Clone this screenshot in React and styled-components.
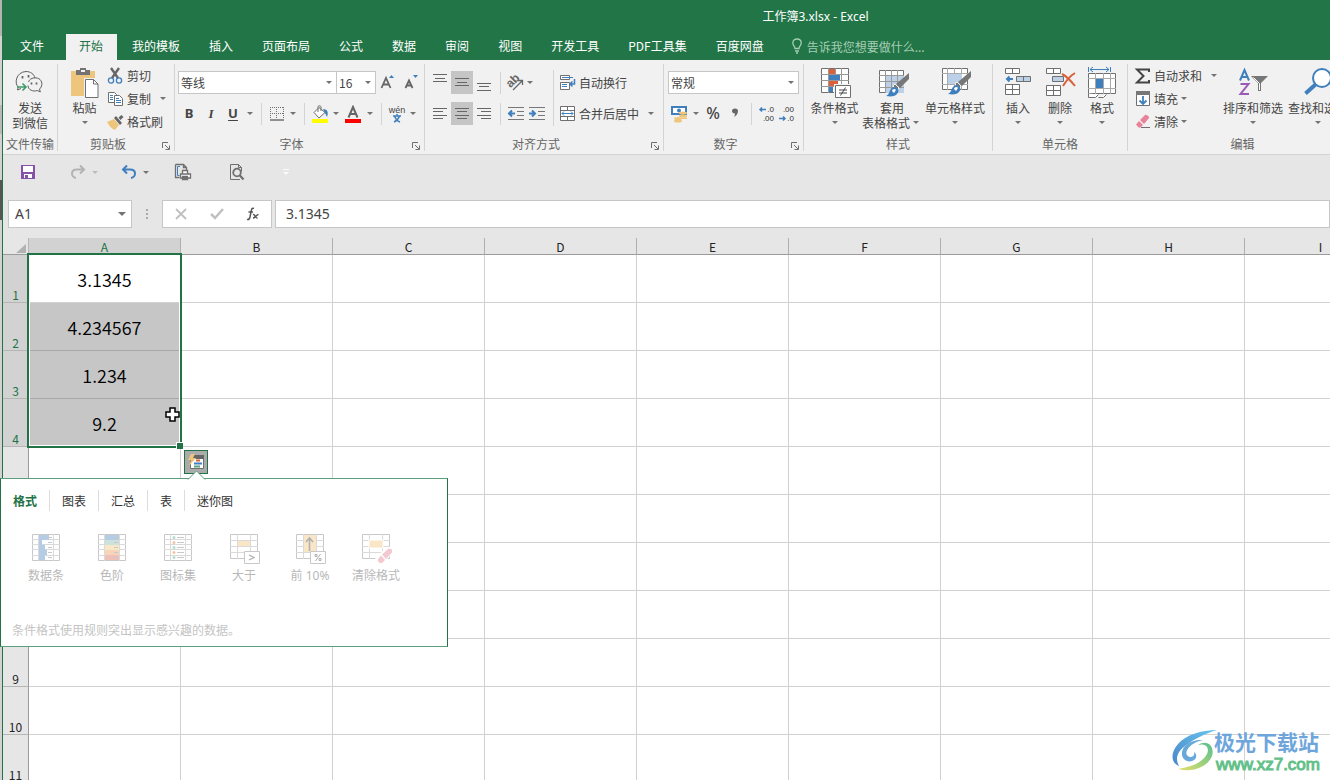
import React from "react";
import styled, { createGlobalStyle, css } from "styled-components";

const GREEN = "#217346";
const GRAY = "#6f6f6f";
const BLUE = "#3f7fbd";
const ORANGE = "#d9603b";
const TAN = "#eec57c";
const LATIN_FIRST = '"Noto Sans", "Noto Sans CJK SC", sans-serif';

const Global = createGlobalStyle`
  *, *::before, *::after { box-sizing: border-box; }
  html, body { margin: 0; padding: 0; }
  body {
    font-family: "Noto Sans CJK SC", "Liberation Sans", sans-serif;
    font-size: 12px;
    line-height: 15px;
    color: #444;
    background: #fff;
  }
  button, input, select { font: inherit; color: inherit; }
`;

/* ---------- page frame ---------- */

const Page = styled.div`
  position: relative;
  display: flex;
  height: 100vh;
  overflow: hidden;
`;

const DesktopEdge = styled.div`
  flex: 0 0 2px;
  background: linear-gradient(
    #b4b4b4 36px, #d2d2d2 36px 105px, #b9b9b9 105px 134px,
    #d2d2d2 134px 180px, #555 180px 220px, #d2d2d2 220px
  );
`;

const Window = styled.div`
  flex: 1;
  min-width: 0;
  border-left: 1px solid ${GREEN};
`;

/* ---------- title and tabs ---------- */

const Header = styled.header`
  background: #227547;
  color: #fff;
`;

const Title = styled.h1`
  margin: 0;
  height: 34px;
  padding-left: 298px;
  font-family: ${LATIN_FIRST};
  font-size: 12px;
  font-weight: 400;
  line-height: 34px;
  text-align: center;
`;

const Tabs = styled.nav`
  display: flex;
  gap: 2px;
  height: 26px;
  padding-left: 4px;
`;

const Tab = styled.button`
  height: 26px;
  padding: 0 14px 4px 13px;
  border: 0;
  white-space: nowrap;
  background: ${(p) => (p.$active ? "#f1f1f1" : "transparent")};
  color: ${(p) => (p.$active ? GREEN : "#fff")};
  &:first-child { margin-right: 6px; }
`;

const TellMe = styled.label`
  display: flex;
  align-items: center;
  gap: 5px;
  padding: 0 0 2px 12px;
  color: #a5cdb5;
  input {
    width: 160px;
    padding: 0;
    border: 0;
    outline: 0;
    background: transparent;
  }
  input::placeholder { color: #a5cdb5; opacity: 1; }
`;

/* ---------- ribbon ---------- */

const Ribbon = styled.div`
  display: flex;
  height: 95px;
  padding: 4px 0 3px;
  overflow: hidden;
  background: #f1f1f1;
  border-bottom: 1px solid #d2d2d2;
`;

const Group = styled.section`
  display: flex;
  flex-direction: column;
  flex: 0 0 ${(p) => p.$w}px;
  border-right: 1px solid #d4d4d4;
  &:last-child { border-right: 0; }
`;

const GroupBody = styled.div`
  flex: 1;
  display: flex;
  align-items: flex-start;
  padding-left: ${(p) => p.$pad || 0}px;
`;

const GroupLabel = styled.div`
  position: relative;
  height: 14px;
  padding-right: ${(p) => (p.$launcher ? 16 : 0)}px;
  line-height: 14px;
  text-align: center;
  color: #666;
  white-space: nowrap;
  svg { position: absolute; right: 4px; bottom: 1px; }
`;

const plainButton = css`
  padding: 0;
  border: 0;
  background: transparent;
  white-space: nowrap;
`;

const BigBtn = styled.button`
  ${plainButton}
  display: flex;
  flex-direction: column;
  align-items: center;
  flex: 0 0 ${(p) => p.$w}px;
  padding-top: 2px;
  span {
    display: flex;
    align-items: center;
    height: 15px;
  }
`;

const Column = styled.div`
  display: flex;
  flex-direction: column;
`;

const Rows = styled(Column)`
  gap: 8px;
  padding-top: 7px;
`;

const Row = styled.div`
  display: flex;
  align-items: center;
  height: 23px;
`;

const SmallBtn = styled.button`
  ${plainButton}
  display: flex;
  align-items: center;
  gap: 3px;
  height: 23px;
  > span { display: flex; align-items: center; }
`;

const IconBtn = styled.button`
  ${plainButton}
  display: flex;
  align-items: center;
  justify-content: center;
  width: ${(p) => p.$w || 22}px;
  height: 23px;
  background: ${(p) => (p.$on ? "#c5c5c5" : "transparent")};
`;

const Letter = styled.span`
  font-family: ${(p) => (p.$serif ? '"Liberation Serif", serif' : '"Noto Sans", sans-serif')};
  font-size: ${(p) => (p.$light ? 16 : 13)}px;
  font-style: ${(p) => (p.$serif ? "italic" : "normal")};
  font-weight: ${(p) => (p.$light ? 500 : 700)};
  text-decoration: ${(p) => (p.$under ? "underline" : "none")};
  text-underline-offset: 2px;
`;

const ArrowBox = styled.span`
  display: inline-flex;
  align-items: center;
  justify-content: center;
  width: 12px;
  height: 15px;
  margin-left: ${(p) => (p.$far ? 6 : 0)}px;
`;

const Sep = styled.i`
  width: 1px;
  height: ${(p) => p.$h || 22}px;
  margin: ${(p) => (p.$h ? "6px 4px 0 5px" : "0 5px")};
  background: #d4d4d4;
`;

const Combo = styled.label`
  position: relative;
  display: flex;
  align-items: center;
  width: ${(p) => p.$w}px;
  height: 23px;
  border: 1px solid #c6c6c6;
  background: #fff;
  & + & { margin-left: -1px; }
  select {
    width: 100%;
    height: 21px;
    padding: 0 2px;
    border: 0;
    appearance: none;
    background: transparent;
  }
  svg { position: absolute; right: 4px; pointer-events: none; }
`;

/* ---------- quick access and formula bar ---------- */

const QuickBar = styled.div`
  display: flex;
  align-items: center;
  height: 34px;
  padding-left: 14px;
  background: #e6e6e6;
`;

const QuickItem = styled.div`
  display: flex;
  align-items: center;
  width: ${(p) => p.$w}px;
`;

const FormulaBar = styled.div`
  display: flex;
  align-items: center;
  height: 49px;
  padding-left: 5px;
  background: #e6e6e6;
  font-family: ${LATIN_FIRST};
  font-size: 14px;
`;

const Box = styled.div`
  display: flex;
  align-items: center;
  flex: ${(p) => (p.$w ? `0 0 ${p.$w}px` : 1)};
  min-width: 0;
  height: 28px;
  margin-left: ${(p) => (p.$w ? 0 : 3)}px;
  border: 1px solid #c6c6c6;
  background: #fff;
  input {
    flex: 1;
    width: 100%;
    min-width: 0;
    padding: 0 0 0 ${(p) => (p.$w ? 6 : 10)}px;
    border: 0;
    outline: 0;
    background: transparent;
  }
`;

const Dots = styled.div`
  display: flex;
  justify-content: center;
  width: 30px;
`;

/* ---------- sheet ---------- */

const Sheet = styled.main`
  position: relative;
`;

const Table = styled.table`
  width: 1394px;
  table-layout: fixed;
  border-collapse: separate;
  border-spacing: 0;
  background: #fff;
`;

const Corner = styled.td`
  width: 26px;
  height: 17px;
  padding: 0;
  background: #e6e6e6;
  border-right: 1px solid #b5b5b5;
  border-bottom: 1px solid #9b9b9b;
  svg { display: block; margin: 4px 0 0 13px; }
`;

const ColHead = styled.th`
  width: 152px;
  height: 17px;
  padding: 2px 0 0;
  font-weight: 400;
  line-height: 14px;
  color: ${(p) => (p.$on ? GREEN : "#222")};
  background: ${(p) => (p.$on ? "#d2d2d2" : "#e6e6e6")};
  border-right: 1px solid #b0b0b0;
  border-bottom: 1px solid #9b9b9b;
`;

const RowHead = styled.th`
  height: 48px;
  padding: 0;
  vertical-align: bottom;
  font-weight: 400;
  line-height: 14px;
  color: ${(p) => (p.$on ? GREEN : "#222")};
  background: ${(p) => (p.$on ? "#d2d2d2" : "#e6e6e6")};
  border-right: 1px solid #9b9b9b;
  border-bottom: 1px solid #b5b5b5;
`;

const Cell = styled.td`
  height: 48px;
  padding: 0;
  text-align: center;
  font-size: 18px;
  font-weight: 350;
  line-height: 24px;
  color: #000;
  background: ${(p) => (p.$sel ? "#c6c6c6" : "#fff")};
  border-right: 1px solid #d2d2d2;
  border-bottom: 1px solid ${(p) => (p.$sel ? "#a8a8a8" : "#d2d2d2")};
`;

const Selection = styled.div`
  position: absolute;
  left: 24px;
  top: 15px;
  width: 155px;
  height: 195px;
  border: 2px solid ${GREEN};
  box-shadow: inset 0 0 0 1px #fff;
  pointer-events: none;
  &::after {
    content: "";
    position: absolute;
    right: -3px;
    bottom: -3px;
    width: 7px;
    height: 7px;
    border: solid #fff;
    border-width: 1px 0 0 1px;
    background: ${GREEN};
  }
`;

const Cursor = styled.svg`
  position: absolute;
  left: 162px;
  top: 169px;
`;

const QuickAnalysis = styled.button`
  position: absolute;
  left: 181px;
  top: 212px;
  width: 24px;
  height: 24px;
  padding: 0;
  border: 1px solid ${GREEN};
  background: #ababab;
  svg { display: block; margin: 2px; }
`;

const Popover = styled.div`
  position: absolute;
  left: -3px;
  top: 240px;
  width: 448px;
  height: 169px;
  border: 1px solid ${GREEN};
  border-top-color: #5c9f7b;
  border-bottom-color: #5c9f7b;
  background: #fff;
`;

const Pointer = styled.svg`
  position: absolute;
  left: 186px;
  top: -9px;
`;

const PopTabs = styled.div`
  display: flex;
  padding-top: 11px;
`;

const PopTab = styled.button`
  height: 21px;
  padding: 0 12px;
  border: 0;
  border-right: 1px solid #dcdcdc;
  background: transparent;
  color: ${(p) => (p.$on ? GREEN : "#333")};
  font-weight: ${(p) => (p.$on ? 700 : 400)};
  &:last-child { border-right: 0; }
`;

const PopItems = styled.div`
  display: flex;
  padding: 21px 0 0 12px;
  font-family: ${LATIN_FIRST};
`;

const PopItem = styled.button`
  ${plainButton}
  display: flex;
  flex-direction: column;
  align-items: center;
  gap: 4px;
  width: 66px;
  color: #b8b8b8;
`;

const PopHint = styled.p`
  margin: 39px 0 0 11px;
  color: #c4c4c4;
`;

const Watermark = styled.aside`
  position: absolute;
  right: 10px;
  bottom: 6px;
  display: flex;
  align-items: center;
`;

const MarkText = styled.div`
  display: flex;
  flex-direction: column;
  margin-left: -4px;
  strong {
    font-size: 21px;
    line-height: 30px;
    color: #6ea6dc;
  }
  a {
    padding-left: 2px;
    font-family: "Liberation Sans", sans-serif;
    font-size: 17px;
    line-height: 18px;
    color: #63c088;
    -webkit-text-stroke: 1px #63c088;
    text-decoration: none;
  }
`;

/* ---------- drawings ---------- */

const Svg = ({ w = 18, h = 18, children, ...rest }) => (
  <svg width={w} height={h} viewBox={`0 0 ${w} ${h}`} fill="none" stroke={GRAY} aria-hidden="true" {...rest}>
    {children}
  </svg>
);

const Tri = ({ color = "#737373", big }) =>
  big ? (
    <Svg w={8} h={4} stroke="none"><path d="M0 0h8L4 4z" fill={color} /></Svg>
  ) : (
    <Svg w={6} h={3} stroke="none"><path d="M0 0h6L3 3z" fill={color} /></Svg>
  );

const Arrow = ({ far, color }) => <ArrowBox $far={far}><Tri color={color} /></ArrowBox>;

const Launcher = () => (
  <Svg w={8} h={8}><path d="M.5 6V.5H6M3 3l4 4M7.500 3.500v4h-4" /></Svg>
);

const WeChat = () => (
  <Svg w={34} h={34} stroke="#5f5f5f">
    <path d="M8 22.500L4.500 24l.8-3C1 17.500 3 6 13 5.500c4.500 0 8 2.500 9 6.500" />
    <path d="M15.500 16c1.500-5 9-5 11.500-2.500 3 3 2 7.500-.5 9.500l.8 3-3-1.500c-4 1.500-9.300-.5-9.300-5" />
    <path d="M9.500 10v2.500M15.500 9v2.500M18.500 16.500v2M23.500 16.500v2" strokeWidth="1.700" />
    <path d="M4 21h9M9.500 17.500L13 21l-3.500 3.500" stroke="#3d9b6c" strokeWidth="1.600" />
  </Svg>
);

const Paste = () => (
  <Svg w={28} h={34}>
    <path d="M0 5h24v25H0z" fill={TAN} stroke="none" />
    <path d="M5 9V4h4V2h6v2h4v5z" fill="#737373" stroke="none" />
    <path d="M10 4h4v2h-4z" fill="#f1f1f1" stroke="none" />
    <path d="M13 12h11l5 5v15H13z" fill="#f1f1f1" stroke="none" />
    <path d="M14.500 13.500h8l4.500 4.500v13.500H14.500z" fill="#fff" />
    <path d="M22.500 13.500V18H27" />
  </Svg>
);

const Scissors = () => (
  <Svg w={18} h={18}>
    <path d="M5 1l7 10M13 1L6 11" strokeWidth="2.400" stroke="#666" />
    <circle cx="5" cy="13.500" r="2.600" stroke={BLUE} strokeWidth="1.300" />
    <circle cx="13" cy="13.500" r="2.600" stroke={BLUE} strokeWidth="1.300" />
  </Svg>
);

const Copy = () => (
  <Svg w={18} h={18}>
    <path d="M2.500 2.500h6l2 2v8h-8z" fill="#fff" />
    <path d="M8.500 5.500h5l3 3v7h-8z" fill="#fff" />
    <path d="M4 5.500h3M4 7.500h3M4 9.500h3M10 8.500h3M10 10.500h5M10 12.500h5" stroke={BLUE} />
  </Svg>
);

const Brush = () => (
  <Svg w={18} h={18} stroke="none">
    <path d="M1 9l7-3 5 6-4 5C6 16 3 13 1 9z" fill={TAN} />
    <path d="M8 5l2-2 6 7-2 2zM12.500 4.500L15.500 2l2 2-3 3z" fill="#666" />
  </Svg>
);

const Borders = () => (
  <Svg w={14} h={14}>
    <path d="M0 .5h14M0 6.500h14M.5 0v12M6.500 0v12M13.500 0v12" strokeDasharray="1 1" />
    <path d="M0 13h14" strokeWidth="1.500" />
  </Svg>
);

const Bucket = () => (
  <Svg w={18} h={18}>
    <path d="M8 2.500l6 5-6 5.500-5-5.500z" fill="#fff" />
    <path d="M7 7V1.500c0-1 3-1 3 .5v4" />
    <path d="M12 4c5 0 5.500 4 4 8l-2-4z" fill={BLUE} stroke="none" />
    <path d="M1 14h16v4H1z" fill="#ff0" stroke="none" />
  </Svg>
);

const FontColor = () => (
  <Svg w={18} h={18}>
    <path d="M4.500 12.500L9 2l4.500 10.500M6 9h6" stroke="#666" strokeWidth="2" />
    <path d="M1 14h16v4H1z" fill="red" stroke="none" />
  </Svg>
);

const GlyphLabel = styled.text`
  font-family: ${(p) => (p.$cjk ? '"Noto Sans CJK SC"' : '"Liberation Sans"')}, sans-serif;
  font-size: ${(p) => p.$s}px;
  font-weight: ${(p) => p.$b || 400};
`;

const Wen = () => (
  <Svg w={20} h={22} stroke="none">
    <GlyphLabel $s={9} x="10" y="10" textAnchor="middle" fill="#444">wén</GlyphLabel>
    <path d="M6 13h8M10 11v2M7.500 13c1 3 3 5 5.500 6M12.500 13c-1 3-3 5-5.500 6" stroke={BLUE} strokeWidth="1.500" />
  </Svg>
);

const GrowFont = ({ small }) => (
  <Svg w={18} h={18}>
    <path d={small ? "M3.500 14L7 6.500 10.500 14M5 11.500h4" : "M2.500 14L7 4l4.500 10M4 10.500h6"} strokeWidth="1.800" stroke="#666" />
    <path d={small ? "M11 1h5l-2.500 3z" : "M10 4h5l-2.500-3z"} fill={BLUE} stroke="none" />
  </Svg>
);

const Lines = ({ d }) => <Svg w={16} h={17}><path d={d} stroke="#666" /></Svg>;

const Rotate = () => (
  <Svg w={18} h={18}>
    <g transform="rotate(-45 8 8)">
      <GlyphLabel $s={12} $b={700} x="1" y="10" fill="#666" stroke="none">ab</GlyphLabel>
    </g>
    <path d="M7 16l9-9M12 6.500h4.500V11" stroke="#666" strokeWidth="1.300" />
  </Svg>
);

const Indent = ({ right }) => (
  <Svg w={18} h={16}>
    <path d="M1 1.500h16M10 5.500h7M10 9.500h7M1 13.500h16" stroke="#777" />
    <path d={right ? "M1 7.500h6M4 4.500l3 3-3 3" : "M8 7.500H2M5 4.500l-3 3 3 3"} stroke={BLUE} strokeWidth="2" />
  </Svg>
);

const Wrap = () => (
  <Svg w={18} h={18}>
    <path d="M2.500 1.500h9v4h-9zM2.500 8.500h9v7h-9z" fill="#fff" />
    <path d="M4 3.500h11M4 10.500h5M4 12.500h5" stroke={BLUE} />
    <path d="M16.500 5v5H12M14.500 7.500L12 10l2.500 2.500" stroke={BLUE} strokeWidth="1.500" />
  </Svg>
);

const Merge = () => (
  <Svg w={18} h={18}>
    <path d="M2.500 1.500h14v14h-14zM2.500 5.500h14M2.500 11.500h14M9.500 1.500v4M9.500 11.500v4" fill="#fff" />
    <path d="M4 8.500h11M6 6.500l-2 2 2 2M13 6.500l2 2-2 2" stroke={BLUE} />
  </Svg>
);

const Money = () => (
  <Svg w={18} h={18} stroke="none">
    <path d="M1 1h16v9H1z" fill={BLUE} />
    <path d="M3 3h12v5H3z" fill="#fff" />
    <circle cx="9" cy="5.500" r="2" fill={BLUE} />
    <ellipse cx="13" cy="8" rx="4" ry="1.500" fill={TAN} /><ellipse cx="13" cy="11" rx="4" ry="1.500" fill={TAN} />
    <ellipse cx="8" cy="13.500" rx="4" ry="1.500" fill={TAN} /><ellipse cx="8" cy="16" rx="4" ry="1.500" fill={TAN} />
    <path d="M12 12.500h5v1.500h-5z" fill={TAN} />
  </Svg>
);

const Decimal = ({ less }) => (
  <Svg w={18} h={20} stroke="none">
    <GlyphLabel $s={8} x="16" y="8" textAnchor="end" fill="#333">{less ? ".00" : ".0"}</GlyphLabel>
    <GlyphLabel $s={8} x="16" y="17" textAnchor="end" fill="#333">{less ? ".0" : ".00"}</GlyphLabel>
    <path d={less ? "M1 14.500h6M5 12.500l2 2-2 2" : "M8 5.500H2M4 3.500l-2 2 2 2"} stroke={BLUE} strokeWidth="1.500" />
  </Svg>
);

const PaintBrush = () => (
  <>
    <path d="M34 7v6l-9 9-4-4z" fill="#777" stroke="none" />
    <path d="M20 18l4 4-2 2-4-4z" fill="#777" stroke="#f1f1f1" />
    <path d="M11 30c4-1 3-8 8-9 4 0 6 4 3 7-3 3-7 2.500-11 2z" fill={BLUE} stroke="none" />
    <path d="M17 25c0-2 3-3 4-1-1 1-1 2-2 3z" fill="#fff" stroke="none" />
  </>
);

const CondFormat = () => (
  <Svg w={34} h={34}>
    <path d="M3.500 2.500h27v24h-27z" fill="#fff" />
    <path d="M3 8.500h28M3 14.500h28M3 20.500h28M10.500 2v25M17.500 2v25M23.500 2v25" stroke="#999" />
    <path d="M11 3h6v5h-6zM11 15h9v5h-9z" fill={ORANGE} stroke="none" />
    <path d="M11 9h11v5H11zM11 21h4v5h-4z" fill={BLUE} stroke="none" />
    <path d="M16 18h18v15H16z" fill="#f1f1f1" stroke="none" />
    <path d="M17.500 19.500h15v12h-15z" fill="#fff" />
    <path d="M21 24h8M21 27h8M27.500 21.500l-5 8" stroke="#444" />
  </Svg>
);

const TableFormat = () => (
  <Svg w={34} h={34}>
    <path d="M4.500 4.500h24v22h-24z" fill="#fff" />
    <path d="M11 10h18v17H11z" fill="#bcd1e8" stroke="none" />
    <path d="M4 9.500h25M4 15.500h25M4 21.500h25M10.500 4v23M16.500 4v23M22.500 4v23" stroke="#999" />
    <PaintBrush />
  </Svg>
);

const CellStyles = () => (
  <Svg w={34} h={34}>
    <path d="M4.500 2.500h25v21h-25z" fill="#fff" />
    <path d="M4 7.500h26M4 18.500h26M9.500 2v22M23.500 2v22M16.500 2v22" stroke="#aaa" />
    <path d="M10 8h14v10H10z" fill="#bcd1e8" stroke="none" />
    <g transform="translate(-1 -2)"><PaintBrush /></g>
  </Svg>
);

const InsertCells = () => (
  <Svg w={34} h={34}>
    <path d="M4.500 2.500h14v5h-14zM11.500 2.500v5M4.500 18.500h14v10h-14zM4.500 23.500h14M11.500 18.500v10" fill="#fff" />
    <path d="M15.500 10.500h14v5h-14z" fill="#bcd1e8" /><path d="M22.500 10.500v5" />
    <path d="M12 13H6M8.500 10.500L6 13l2.500 2.500" stroke={BLUE} strokeWidth="2" />
  </Svg>
);

const DeleteCells = () => (
  <Svg w={34} h={34}>
    <path d="M3.500 2.500h14v5h-14zM10.500 2.500v5M3.500 19.500h14v10h-14zM3.500 24.500h14M10.500 19.500v10" fill="#fff" />
    <path d="M9.500 10.500h11v5h-11z" fill="#bcd1e8" />
    <path d="M19 8c4 2 9 7 13 12M32 7c-5 3-9 8-12 13" stroke={ORANGE} strokeWidth="2" />
  </Svg>
);

const FormatCells = () => (
  <Svg w={34} h={34}>
    <path d="M3.500 1v5M25.500 1v5M5 3.500h19M8 1L5 3.500 8 6M21 1l3 2.500L21 6" stroke={BLUE} />
    <path d="M3.500 7.500h27v20h-27z" fill="#fff" />
    <path d="M3 12.500h28M3 22.500h28M10.500 7v21M18.500 7v21M25.500 7v21" stroke="#aaa" />
    <path d="M3.500 27.500v4h7l3-3M13.500 31.500h5l3-3" fill="#fff" />
    <path d="M11 13h7v9h-7z" fill={BLUE} stroke="none" />
  </Svg>
);

const Sigma = () => (
  <Svg w={18} h={18}><path d="M16 5V2.500H4L10.500 9 4 15.500h12V13" stroke="#444" strokeWidth="2" /></Svg>
);

const Fill = () => (
  <Svg w={18} h={18}>
    <path d="M3.500 2.500h13v13h-13z" fill="#fff" /><path d="M3 1h14v4H3z" fill="#777" stroke="none" />
    <path d="M10 6v8M6.500 10.500L10 14l3.500-3.500" stroke={BLUE} strokeWidth="1.800" />
  </Svg>
);

const Eraser = () => (
  <Svg w={18} h={18}>
    <path d="M7 7l5-5c1-1 5 2 4 3l-5 6z" fill="#e8829a" stroke="none" /><path d="M6 8l4 4-2.500 2.500H5.500L3 11.500z" fill="#e8829a" stroke="none" />
    <path d="M8 14.500h9" />
  </Svg>
);

const SortFilter = () => (
  <Svg w={34} h={34}>
    <path d="M4 14.500L8.500 4 13 14.500M5.500 11h6" stroke={BLUE} strokeWidth="2" />
    <path d="M4.500 18h8l-8 10H13" stroke="#9a5bb8" strokeWidth="2" />
    <path d="M15 10h17l-7 7v8h-3v-8z" fill="#777" stroke="none" />
    <path d="M17.500 11.500l6 6V24" stroke="#fff" />
  </Svg>
);

const Find = () => (
  <Svg w={34} h={34}>
    <circle cx="21" cy="12" r="9" fill="#fff" stroke={BLUE} strokeWidth="2" />
    <path d="M14.500 18.500l-10 9" stroke={BLUE} strokeWidth="4" />
  </Svg>
);

const Save = () => (
  <Svg w={16} h={16} stroke="none">
    <path d="M1 1h14v14H1z" fill="#8552a8" /><path d="M3 2h10v6H3zM4 10h8v4H4z" fill="#fff" /><path d="M5 11h3v3H5z" fill="#8552a8" />
  </Svg>
);

const Turn = ({ redo }) => (
  <Svg w={16} h={16}>
    <g transform={redo ? "translate(16 0) scale(-1 1)" : undefined} stroke={redo ? "#b3b3b3" : BLUE} strokeWidth="2">
      <path d="M6 1.500L2 5.500l4 4M2 5.500h7c7 0 6 8 1 8.500" />
    </g>
  </Svg>
);

const PrintDoc = () => (
  <Svg w={18} h={18}>
    <path d="M1.500 1.500h8l3 3v3M1.500 1.500v13h4M9.500 1.500v3h3" strokeWidth="1.300" />
    <path d="M6 3.500H3.500v9h2" stroke={BLUE} />
    <path d="M8.500 11V7.500h5V11M6.500 11h10v4h-10zM8.500 13.500h5v3h-5z" fill="#fff" strokeWidth="1.300" />
  </Svg>
);

const Preview = () => (
  <Svg w={16} h={18}>
    <path d="M1.500 16.500v-15h8l3 3v4M9.500 1.500v3h3M1.500 16.500H11" />
    <circle cx="8" cy="9.500" r="3.800" strokeWidth="1.800" /><path d="M10.500 12l4 4.500" strokeWidth="2.200" />
  </Svg>
);

const Bulb = () => (
  <Svg w={10} h={16} stroke="#a5cdb5">
    <path d="M3 10.500C3 8 .8 7.500.8 4.900.8 2.500 2.600 1 5 1s4.200 1.500 4.200 3.900C9.200 7.500 7 8 7 10.500zM3 13h4M4 15h2" strokeWidth="1.300" />
  </Svg>
);

const MiniGrid = ({ kind }) => {
  const rows = [0, 1, 2, 3, 4];
  const isRule = ["more", "top", "clear"].includes(kind);
  const scale = ["#b5cde4", "#cbe3dc", "#f8e8c8", "#f7d5bb", "#f0c0b8"];
  const bars = [10, 3, 6, 8, 6];
  return (
    <Svg w={32} h={32} stroke="#c8c8c8">
      <path d={isRule ? "M2.500 2.500h27v24h-27z" : "M2.500 2.500h27v26h-27z"} fill="#fff" />
      <path d={isRule ? "M2 8.500h28M2 14.500h28M2 20.500h28M9.500 2v25M22.500 2v25" : "M2 7.500h28M2 12.500h28M2 17.500h28M2 23.500h28M8.500 2v27M23.500 2v27"} stroke="#dadada" />
      {kind === "bars" && rows.map((r) => <rect key={r} x="9" y={3 + r * 5} width={bars[r]} height="5" fill="#b5cde4" stroke="none" />)}
      {kind === "scale" && rows.map((r) => <rect key={r} x="9" y={3 + r * 5} width="14" height="5" fill={scale[r]} stroke="none" />)}
      {kind === "icons" && rows.map((r) => <circle key={r} cx="12" cy={5.5 + r * 5} r="1.500" fill={r % 2 ? "#f5c6a5" : "#b8dccf"} stroke="none" />)}
      {!isRule && rows.map((r) => <path key={r} d={`M${kind === "icons" ? 15 : 18} ${5.5 + r * 5}H22`} />)}
      {kind === "more" && <path d="M10 9h12v5H10z" fill="#f8e6c6" stroke="none" />}
      {kind === "top" && <path d="M10 3h12v17H10z" fill="#f8e6c6" stroke="none" />}
      {kind === "top" && <path d="M15.500 19V6M12 10l3.500-4L19 10" stroke="#b0b0b0" strokeWidth="1.500" />}
      {kind === "clear" && <path d="M9 8h14v8H9z" fill="#f8e6c6" stroke="#fff" />}
      {(kind === "more" || kind === "top") && <path d="M16.500 19.500h15v12h-15z" fill="#fff" />}
      {kind === "more" && <path d="M21 23l5 2.500-5 2.500" stroke="#b0b0b0" strokeWidth="1.300" />}
      {kind === "top" && <path d="M26.500 22l-5 7M21 22.500h2v2h-2zM25 26.500h2v2h-2z" stroke="#b0b0b0" />}
      {kind === "clear" && (
        <g stroke="none">
          <path d="M15 26L27 15h5v7L22 32h-4z" fill="#fff" />
          <path d="M22 22.500l6.500-6 3.500 1v3L26 27zM21 23.500l4 4.500-3 3h-2.500L17.500 28z" fill="#f4c8d1" />
        </g>
      )}
    </Svg>
  );
};

const Logo = () => (
  <svg width="46" height="44" viewBox="0 0 46 44" aria-hidden="true">
    <defs>
      <linearGradient id="sky" x1="0" y1="1" x2="1" y2="0"><stop stopColor="#4a87c8" /><stop offset="1" stopColor="#68c5ee" /></linearGradient>
      <linearGradient id="leaf" x1="0" y1="1" x2="1" y2="0"><stop stopColor="#e4e06a" /><stop offset="1" stopColor="#55bf91" /></linearGradient>
    </defs>
    <path d="M45 2C29 2 14 7 6 16c-8 9-7 19 1 22-4-7-2-14 6-20C22 11 32 6 45 2z" fill="url(#sky)" />
    <path d="M31 12C19 11 9 18 10 27c1 6 8 8 12 5 3-2 3-6 0-8 1 3-1 5-4 5-8-2-2-14 13-17z" fill="#68a8db" />
    <path d="M26 17c7-2 12 2 9 9-4 8-15 13-29 15 14 4 30-2 34-13 3-10-5-17-14-11z" fill="url(#leaf)" />
  </svg>
);

/* ---------- data ---------- */

const TABS = ["文件", "开始", "我的模板", "插入", "页面布局", "公式", "数据", "审阅", "视图", "开发工具", "PDF工具集", "百度网盘"];
const COLS = "ABCDEFGHI".split("");
const VALUES = ["3.1345", "4.234567", "1.234", "9.2"];
const POP_TABS = ["格式", "图表", "汇总", "表", "迷你图"];
const POP_ITEMS = [
  ["数据条", "bars"], ["色阶", "scale"], ["图标集", "icons"],
  ["大于", "more"], ["前 10%", "top"], ["清除格式", "clear"],
];

const Big = ({ w, icon, top, bottom, menu }) => (
  <BigBtn $w={w}>
    {icon}
    <span>{top}</span>
    <span>{bottom}{menu && <Arrow />}</span>
  </BigBtn>
);

const Small = ({ icon, text, menu, far }) => (
  <SmallBtn>
    {icon}
    <span>{text}{menu && <Arrow far={far} />}</span>
  </SmallBtn>
);

const RibbonGroup = ({ w, pad, label, launcher, children }) => (
  <Group $w={w}>
    <GroupBody $pad={pad}>{children}</GroupBody>
    <GroupLabel $launcher={launcher}>{label}{launcher && <Launcher />}</GroupLabel>
  </Group>
);

const Picker = ({ w, value, label }) => (
  <Combo $w={w}>
    <select aria-label={label} defaultValue={value}><option>{value}</option></select>
    <Tri />
  </Combo>
);

export default function App() {
  return (
    <Page>
      <Global />
      <DesktopEdge />
      <Window>
        <Header>
          <Title>工作簿3.xlsx - Excel</Title>
          <Tabs>
            {TABS.map((t) => <Tab key={t} $active={t === "开始"}>{t}</Tab>)}
            <TellMe>
              <Bulb />
              <input aria-label="操作说明搜索" placeholder="告诉我您想要做什么..." />
            </TellMe>
          </Tabs>
        </Header>

        <Ribbon>
          <RibbonGroup w={55} label="文件传输">
            <Big w={54} icon={<WeChat />} top="发送" bottom="到微信" />
          </RibbonGroup>

          <RibbonGroup w={117} pad={5} label="剪贴板" launcher>
            <Big w={43} icon={<Paste />} top="粘贴" menu />
            <Column>
              <Small icon={<Scissors />} text="剪切" />
              <Small icon={<Copy />} text="复制" menu far />
              <Small icon={<Brush />} text="格式刷" />
            </Column>
          </RibbonGroup>

          <RibbonGroup w={250} pad={3} label="字体" launcher>
            <Rows>
              <Row>
                <Picker w={159} value="等线" label="字体名称" />
                <Picker w={40} value="16" label="字号" />
                <IconBtn $w={24} aria-label="增大字号"><GrowFont /></IconBtn>
                <IconBtn aria-label="减小字号"><GrowFont small /></IconBtn>
              </Row>
              <Row>
                <IconBtn><Letter>B</Letter></IconBtn>
                <IconBtn><Letter $serif>I</Letter></IconBtn>
                <IconBtn><Letter $under>U</Letter></IconBtn>
                <Arrow />
                <Sep />
                <IconBtn $w={20} aria-label="边框"><Borders /></IconBtn>
                <Arrow />
                <Sep />
                <IconBtn $w={20} aria-label="填充颜色"><Bucket /></IconBtn>
                <Arrow />
                <IconBtn aria-label="字体颜色"><FontColor /></IconBtn>
                <Arrow />
                <Sep />
                <IconBtn $w={20} aria-label="拼音"><Wen /></IconBtn>
                <Arrow />
              </Row>
            </Rows>
          </RibbonGroup>

          <RibbonGroup w={239} pad={4} label="对齐方式" launcher>
            <Rows>
              <Row>
                <IconBtn aria-label="顶端对齐"><Lines d="M1 .5h14M3 4.500h10M1 7.500h14" /></IconBtn>
                <IconBtn $on aria-label="垂直居中"><Lines d="M1 4.500h14M3 8.500h10M1 11.500h14" /></IconBtn>
                <IconBtn aria-label="底端对齐"><Lines d="M1 9.500h14M3 12.500h10M1 16.500h14" /></IconBtn>
                <Sep />
                <IconBtn $w={18} aria-label="方向"><Rotate /></IconBtn>
                <Arrow />
              </Row>
              <Row>
                <IconBtn aria-label="左对齐"><Lines d="M1 3.500h14M1 6.500h10M1 10.500h14M1 13.500h10" /></IconBtn>
                <IconBtn $on aria-label="居中"><Lines d="M1 3.500h14M3 6.500h10M1 10.500h14M3 13.500h10" /></IconBtn>
                <IconBtn aria-label="右对齐"><Lines d="M1 3.500h14M5 6.500h10M1 10.500h14M5 13.500h10" /></IconBtn>
                <Sep />
                <IconBtn $w={20} aria-label="减少缩进"><Indent /></IconBtn>
                <IconBtn aria-label="增加缩进"><Indent right /></IconBtn>
              </Row>
            </Rows>
            <Sep $h={56} />
            <Rows>
              <Small icon={<Wrap />} text="自动换行" />
              <Small icon={<Merge />} text="合并后居中" menu far />
            </Rows>
          </RibbonGroup>

          <RibbonGroup w={140} pad={4} label="数字" launcher>
            <Rows>
              <Row><Picker w={131} value="常规" label="数字格式" /></Row>
              <Row>
                <IconBtn aria-label="会计数字格式"><Money /></IconBtn>
                <Arrow />
                <IconBtn><Letter $light>%</Letter></IconBtn>
                <IconBtn aria-label="千位分隔样式">
                  <Svg w={8} h={12} stroke="none"><path d="M1 3a3 2.500 0 0 1 6 0c0 3-2 5-4 6 1-2 1-3 1-3.500C2 5.500 1 4.500 1 3z" fill="#666" /></Svg>
                </IconBtn>
                <Sep />
                <IconBtn $w={20} aria-label="增加小数位数"><Decimal /></IconBtn>
                <IconBtn $w={20} aria-label="减少小数位数"><Decimal less /></IconBtn>
              </Row>
            </Rows>
          </RibbonGroup>

          <RibbonGroup w={189} pad={4} label="样式">
            <Big w={53} icon={<CondFormat />} top="条件格式" menu />
            <Big w={62} icon={<TableFormat />} top="套用" bottom="表格格式" menu />
            <Big w={64} icon={<CellStyles />} top="单元格样式" menu />
          </RibbonGroup>

          <RibbonGroup w={135} pad={4} label="单元格">
            <Big w={42} icon={<InsertCells />} top="插入" menu />
            <Big w={42} icon={<DeleteCells />} top="删除" menu />
            <Big w={42} icon={<FormatCells />} top="格式" menu />
          </RibbonGroup>

          <RibbonGroup w={229} pad={5} label="编辑">
            <Column>
              <Small icon={<Sigma />} text="自动求和" menu far />
              <Small icon={<Fill />} text="填充" menu />
              <Small icon={<Eraser />} text="清除" menu />
            </Column>
            <Big w={66} icon={<SortFilter />} top="排序和筛选" menu />
            <Big w={64} icon={<Find />} top="查找和选择" menu />
          </RibbonGroup>
        </Ribbon>

        <QuickBar>
          <QuickItem $w={50}><IconBtn aria-label="保存"><Save /></IconBtn></QuickItem>
          <QuickItem $w={51}><IconBtn aria-label="恢复"><Turn redo /></IconBtn><Arrow color="#bbb" /></QuickItem>
          <QuickItem $w={54}><IconBtn aria-label="撤消"><Turn /></IconBtn><Arrow /></QuickItem>
          <QuickItem $w={54}><IconBtn aria-label="打印"><PrintDoc /></IconBtn></QuickItem>
          <QuickItem $w={57}><IconBtn aria-label="打印预览"><Preview /></IconBtn></QuickItem>
          <QuickItem $w={12}>
            <Svg w={6} h={8} stroke="#fafafa"><path d="M0 1.500h6" /><path d="M0 4h6L3 7z" fill="#fafafa" stroke="none" /></Svg>
          </QuickItem>
        </QuickBar>

        <FormulaBar>
          <Box $w={124}>
            <input aria-label="名称框" defaultValue="A1" />
            <IconBtn $w={18} aria-label="名称列表"><Tri big /></IconBtn>
          </Box>
          <Dots>
            <Svg w={2} h={10} stroke="none"><path d="M0 0h2v2H0zM0 4h2v2H0zM0 8h2v2H0z" fill="#aaa" /></Svg>
          </Dots>
          <Box $w={110}>
            <IconBtn $w={36} aria-label="取消"><Svg w={12} h={12} stroke="#c0c0c0"><path d="M1 1l10 10M11 1L1 11" strokeWidth="1.800" /></Svg></IconBtn>
            <IconBtn $w={36} aria-label="输入"><Svg w={14} h={12} stroke="#c0c0c0"><path d="M1 6l4 4 8-9" strokeWidth="2.500" /></Svg></IconBtn>
            <IconBtn $w={36} aria-label="插入函数">
              <Svg w={14} h={14} stroke="#555">
                <path d="M8 1.500C5.500.5 5.500 3 5 5L4 10c-.5 2-1 3-3 2.500M2.500 5h4.500M7 7.500c2-1 2 4 4.500 3.500M12.500 7.500c-2 0-3 3.500-5.500 3.500" strokeWidth="1.500" />
              </Svg>
            </IconBtn>
          </Box>
          <Box><input aria-label="编辑栏" defaultValue="3.1345" /></Box>
        </FormulaBar>

        <Sheet>
          <Table>
            <thead>
              <tr>
                <Corner><Svg w={10} h={9} stroke="none"><path d="M10 0v9H0z" fill="#b2b2b2" /></Svg></Corner>
                {COLS.map((c, i) => <ColHead key={c} $on={i === 0}>{c}</ColHead>)}
              </tr>
            </thead>
            <tbody>
              {Array.from({ length: 11 }, (_, r) => (
                <tr key={r}>
                  <RowHead $on={r < 4}>{r + 1}</RowHead>
                  {COLS.map((c, i) => (
                    <Cell key={c} $sel={i === 0 && r > 0 && r < 4}>{i === 0 ? VALUES[r] : null}</Cell>
                  ))}
                </tr>
              ))}
            </tbody>
          </Table>
          <Selection />
          <Cursor width="15" height="15" viewBox="0 0 15 15" aria-hidden="true">
            <path d="M5 1h5v4h4v5h-4v4H5v-4H1V5h4z" fill="#fff" stroke="#000" strokeWidth="1.500" />
          </Cursor>
          <QuickAnalysis aria-label="快速分析">
            <Svg w={18} h={18}>
              <path d="M3.500 3.500h13v12h-13z" fill="#fff" /><path d="M6 2h11v4H6z" fill="#666" stroke="none" />
              <path d="M9 7.500h4" stroke={ORANGE} strokeWidth="2" /><path d="M7 10.500h8" stroke={BLUE} strokeWidth="2" /><path d="M7 13.500h6" stroke="#5aa083" strokeWidth="2" />
              <path d="M4 1h4L6 5h3l-7 8 2-6H1z" fill={TAN} stroke="none" />
            </Svg>
          </QuickAnalysis>
          <Popover>
            <Pointer width="20" height="10" viewBox="0 0 20 10" aria-hidden="true">
              <path d="M1 9.500L9.500 1 18 9.500" fill="#fff" stroke="#5c9f7b" />
              <path d="M2 9.500h15" stroke="#fff" />
            </Pointer>
            <PopTabs>{POP_TABS.map((t, i) => <PopTab key={t} $on={i === 0}>{t}</PopTab>)}</PopTabs>
            <PopItems>
              {POP_ITEMS.map(([t, kind]) => <PopItem key={t}><MiniGrid kind={kind} />{t}</PopItem>)}
            </PopItems>
            <PopHint>条件格式使用规则突出显示感兴趣的数据。</PopHint>
          </Popover>
        </Sheet>
      </Window>
      <Watermark>
        <Logo />
        <MarkText>
          <strong>极光下载站</strong>
          <a href="#top">www.xz7.com</a>
        </MarkText>
      </Watermark>
    </Page>
  );
}
